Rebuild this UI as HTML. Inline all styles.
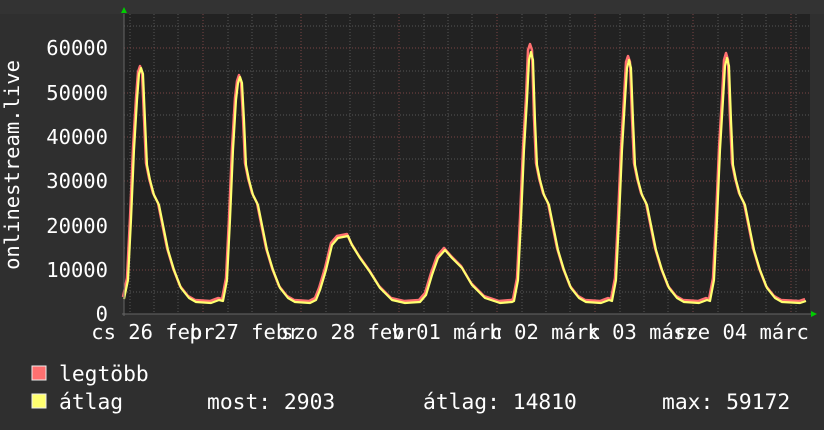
<!DOCTYPE html>
<html><head><meta charset="utf-8"><style>
html,body{margin:0;padding:0;background:#2f2f2f;}
svg{display:block}
text{font-family:"DejaVu Sans Mono","Liberation Mono",monospace;font-size:20.5px;fill:#fff}
.lg{font-size:21.3px}
</style></head><body>
<svg width="824" height="430" viewBox="0 0 824 430" xmlns="http://www.w3.org/2000/svg">
<rect x="0" y="0" width="824" height="430" fill="#2f2f2f"/>
<rect x="0" y="0" width="824" height="14" fill="#333"/>
<rect x="124" y="14" width="686" height="300" fill="#222"/>
<g stroke="#555" stroke-width="1" stroke-dasharray="1,2">
<path d="M130 14V314M154 14V314M178 14V314M228 14V314M252 14V314M276 14V314M326 14V314M350 14V314M374 14V314M424 14V314M448 14V314M472 14V314M522 14V314M546 14V314M570 14V314M620 14V314M644 14V314M668 14V314M718 14V314M742 14V314M766 14V314M796 14V314"/>
<path d="M124 292H810M124 248H810M124 204H810M124 159H810M124 115H810M124 71H810M124 26H810"/>
</g>
<g stroke="#7a4444" stroke-width="1" stroke-dasharray="1,2">
<path d="M203 14V314M301 14V314M399 14V314M497 14V314M595 14V314M693 14V314M791 14V314"/>
<path d="M124 270H810M124 226H810M124 181H810M124 137H810M124 93H810M124 48H810"/>
</g>
<g fill="none" stroke-linejoin="round">
<polyline transform="translate(-1,-2)" stroke="#ff7070" stroke-width="2.5" points="124,299 128,280 131,220 134,150 137,100 139,74 141,68 143,74 145,120 147,165 150,180 154,195 159,205 163,225 168,250 174,270 181,288 189,298 196,302 211,303 219,300 223,301 227,280 230,220 233,150 236,100 238,83 240,77 242,83 244,120 246,165 249,180 253,195 258,205 262,225 267,250 273,270 280,288 288,298 295,302 310,303 316,300 320,290 326,270 332,245 338,238 348,236 352,245 360,258 370,272 380,288 392,300 405,303 420,302 426,295 432,275 438,258 445,250 452,258 462,268 472,285 485,298 500,303 512,302 514,301 518,280 521,220 524,150 527,100 529,52 531,46 533,52 535,120 537,165 540,180 544,195 549,205 553,225 558,250 564,270 571,288 579,298 586,302 601,303 609,300 612,301 616,280 619,220 622,150 625,100 627,64 629,58 631,64 633,120 635,165 638,180 642,195 647,205 651,225 656,250 662,270 669,288 677,298 684,302 699,303 707,300 710,301 714,280 717,220 720,150 723,100 725,62 727,55 729,62 731,120 733,165 736,180 740,195 745,205 749,225 754,250 760,270 767,288 775,298 782,302 800,303 806,301"/>
<polyline stroke="#ffff70" stroke-width="2.2" points="124,299 128,280 131,220 134,150 137,100 139,74 141,68 143,74 145,120 147,165 150,180 154,195 159,205 163,225 168,250 174,270 181,288 189,298 196,302 211,303 219,300 223,301 227,280 230,220 233,150 236,100 238,83 240,77 242,83 244,120 246,165 249,180 253,195 258,205 262,225 267,250 273,270 280,288 288,298 295,302 310,303 316,300 320,290 326,270 332,245 338,238 348,236 352,245 360,258 370,272 380,288 392,300 405,303 420,302 426,295 432,275 438,258 445,250 452,258 462,268 472,285 485,298 500,303 512,302 514,301 518,280 521,220 524,150 527,100 529,60 531,52 533,60 535,120 537,165 540,180 544,195 549,205 553,225 558,250 564,270 571,288 579,298 586,302 601,303 609,300 612,301 616,280 619,220 622,150 625,100 627,68 629,60 631,68 633,120 635,165 638,180 642,195 647,205 651,225 656,250 662,270 669,288 677,298 684,302 699,303 707,300 710,301 714,280 717,220 720,150 723,100 725,66 727,58 729,66 731,120 733,165 736,180 740,195 745,205 749,225 754,250 760,270 767,288 775,298 782,302 800,303 806,301"/>
</g>
<path d="M124 14V316M122 314H812" stroke="#666" stroke-width="1"/>
<path d="M121 13L124 7L127 13Z" fill="#0c0"/>
<path d="M811 311L817 314L811 317Z" fill="#0c0"/>
<g text-anchor="end">
<text x="108" y="321">0</text>
<text x="108" y="277">10000</text>
<text x="108" y="233">20000</text>
<text x="108" y="188">30000</text>
<text x="108" y="144">40000</text>
<text x="108" y="100">50000</text>
<text x="108" y="55">60000</text>
</g>
<text transform="translate(19,165) rotate(-90)" text-anchor="middle">onlinestream.live</text>
<g text-anchor="middle">
<text x="153" y="339">cs 26 febr</text>
<text x="245" y="339">p 27 febr</text>
<text x="349" y="339">szo 28 febr</text>
<text x="447" y="339">v 01 márc</text>
<text x="545" y="339">h 02 márc</text>
<text x="643" y="339">k 03 márc</text>
<text x="741" y="339">sze 04 márc</text>
</g>
<rect x="32" y="366" width="14" height="14" fill="#ff7070" stroke="#eee" stroke-width="1"/>
<rect x="32" y="394" width="14" height="14" fill="#ffff70" stroke="#eee" stroke-width="1"/>
<text class="lg" x="59" y="381">legtöbb</text>
<text class="lg" x="59" y="409">átlag</text>
<text class="lg" x="207" y="409">most: 2903</text>
<text class="lg" x="423" y="409">átlag: 14810</text>
<text class="lg" x="662" y="409">max: 59172</text>
</svg>
</body></html>
